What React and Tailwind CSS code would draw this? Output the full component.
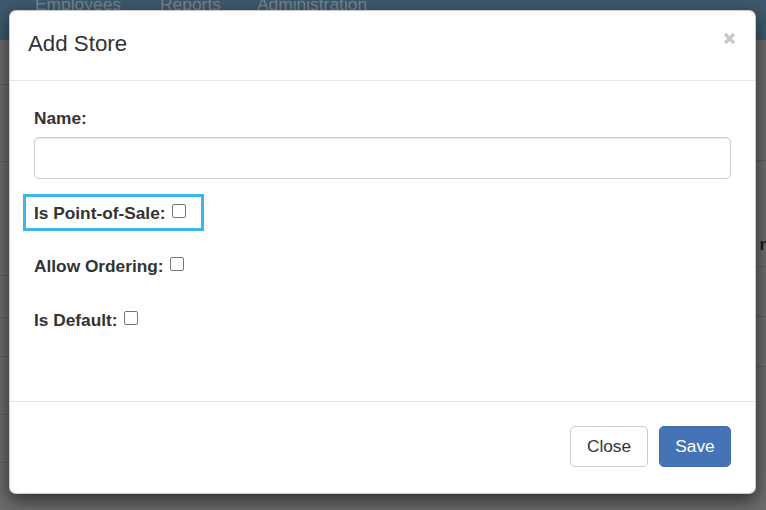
import React from "react";

const font = { fontFamily: '"Liberation Sans", Arial, Helvetica, sans-serif' };

function CheckRow({ label }) {
  return (
    <div className="flex items-start h-[24px] text-[17.3px] font-bold leading-[24px] text-[#333]">
      <span>{label}</span>
      <span className="ml-[6px] mt-[3px] w-[14px] h-[14px] rounded-[2px] border border-[#767676] bg-white" />
    </div>
  );
}

function BgRows({ lines, className }) {
  return (
    <div className={className}>
      {lines.map((h, i) => (
        <div key={i} className="border-b border-[#5d5d5d]" style={{ height: h }} />
      ))}
    </div>
  );
}

export default function App() {
  return (
    <div className="relative w-[766px] h-[510px] overflow-hidden bg-[#6c6c6c]" style={font}>
      {/* background page (dimmed by modal backdrop) */}
      <div className="h-[40px] bg-[#3e596c] overflow-hidden text-[17.4px] text-[#76848f]">
        <div className="flex pl-[35px] -mt-[8px] leading-[24px]">
          <span>Employees</span>
          <span className="ml-[39px]">Reports</span>
          <span className="ml-[36px]">Administration</span>
        </div>
      </div>
      <div className="flex">
        <BgRows className="w-[380px]" lines={[45, 77, 114, 42, 39, 58, 48]} />
        <div className="flex-1 relative">
          <BgRows lines={[121, 106, 50, 50]} />
          <div className="absolute right-[-4px] top-[193px] text-[17px] font-bold leading-[24px] text-[#1a1a1a]">n</div>
        </div>
      </div>

      {/* modal */}
      <div className="absolute left-[9px] top-[10px] w-[747px] rounded-[7px] bg-white border border-black/20 shadow-[0_6px_18px_rgba(0,0,0,0.6)]">
        <div className="h-[70px] border-b border-[#e5e5e5] flex items-start justify-between pt-[21px] pl-[18px] pr-[19px]">
          <div className="text-[22.3px] leading-[24px] text-[#333]">Add Store</div>
          <svg width="13" height="13" viewBox="0 0 13 13">
            <path d="M2 2 L11 11 M11 2 L2 11" stroke="#c9c9c9" strokeWidth="3.4" strokeLinecap="butt" />
          </svg>
        </div>

        <div className="h-[320px] px-[24px] pt-[25px]">
          <div className="text-[17.3px] font-bold leading-[24px] text-[#333]">Name:</div>
          <div className="mt-[7px] h-[42px] rounded-[5px] border border-[#cccccc] shadow-[inset_0_1px_1px_rgba(0,0,0,0.075)]" />
          <div className="mt-[15px] -ml-[11px] flex w-fit border-[3px] border-[#3db5e6] pl-[8px] pr-[15px] pt-[4px] pb-[3px]">
            <CheckRow label="Is Point-of-Sale:" />
          </div>
          <div className="mt-[23px]">
            <CheckRow label="Allow Ordering:" />
          </div>
          <div className="mt-[30px]">
            <CheckRow label="Is Default:" />
          </div>
        </div>

        <div className="border-t border-[#e5e5e5] flex justify-end gap-[11px] pt-[24px] pb-[26px] pr-[24px]">
          <button className="w-[78px] h-[41px] rounded-[5px] border border-[#cccccc] bg-white text-[17.3px] text-[#333]">
            Close
          </button>
          <button className="w-[72px] h-[41px] rounded-[5px] border border-[#3f6dab] bg-[#4474b6] text-[17.3px] text-white">
            Save
          </button>
        </div>
      </div>
    </div>
  );
}
